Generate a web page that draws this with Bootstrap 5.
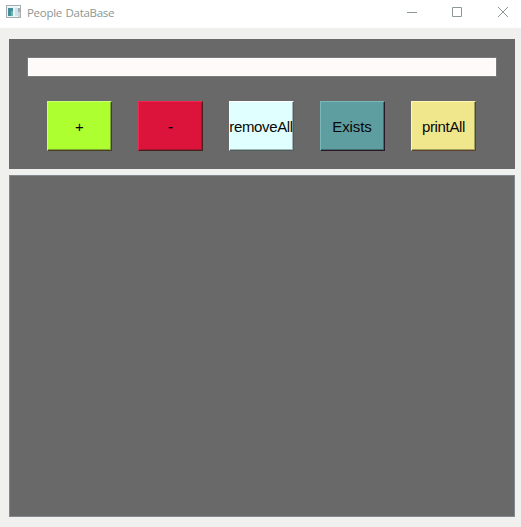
<!DOCTYPE html>
<html lang="en">
<head>
<meta charset="utf-8">
<title>People DataBase</title>
<link href="https://cdn.jsdelivr.net/npm/bootstrap@5.3.0/dist/css/bootstrap.min.css" rel="stylesheet">
<style>
body{background:#f0f0ee;font-family:"Liberation Sans",Arial,sans-serif}
.titlebar{height:28px;padding:5px 12px 0 6px}
.app-name{font:11.5px/16px "Open Sans","Noto Sans",sans-serif;color:#8b9793;margin-left:6px;letter-spacing:-.3px;word-spacing:1px}
.controls{gap:34px;padding-top:1px}
.client{padding:11px 6px 10px 9px;gap:6px}
.pane{background:#696969}
.tools{height:130px;padding:18px}
.entry{height:20px;border:1px solid #7a7a7a;background:#fffafa;box-shadow:inset 0 0 0 1px #fff;font-size:13px}
.keys{gap:26px;margin:24px 0 0 20px}
.key{width:65px;height:50px;border-radius:0;border:1px solid;padding:2px 0 0;font-size:15px;line-height:18px;white-space:nowrap;display:flex;justify-content:center;align-items:center}
.key span{flex:none}
.key,.key:hover{color:#080808}
.key-add,.key-add:hover{background:#adff2f;border-color:#c8ff75 #48401c #48401c #c8ff75;box-shadow:inset -1px -1px #7fa832}
.key-del,.key-del:hover{background:#dc143c;border-color:#f02850 #48201c #48201c #f02850;box-shadow:inset -1px -1px #a01832;color:#000}
.key-del span{-webkit-text-stroke:.2px #000}
.key-clear,.key-clear:hover{background:#e0ffff;border-color:#fff #4c6060 #4c6060 #fff;box-shadow:inset -1px -1px #a0b4b4}
.key-find,.key-find:hover{background:#5f9ea0;border-color:#78b8ba #281828 #281828 #78b8ba;box-shadow:inset -1px -1px #406c70}
.key-print,.key-print:hover{background:#f0e68c;border-color:#fff8b4 #604028 #604028 #fff8b4;box-shadow:inset -1px -1px #a0a060}
.key-clear,.key-print{letter-spacing:-.36px}
.key-clear{padding-right:1px}
.key-find{letter-spacing:-.1px;padding-right:1px}
.output{border:1px solid #828790}
</style>
<script src="https://cdn.jsdelivr.net/npm/bootstrap@5.3.0/dist/js/bootstrap.bundle.min.js"></script>
</head>
<body class="vh-100 d-flex flex-column overflow-hidden">
<header class="titlebar bg-white d-flex align-items-start">
  <svg width="15" height="13" shape-rendering="crispEdges"><path fill="#a7adae" d="M0 0h15v13H0z"/><path fill="#e9f4fa" d="M1 1h11v11H1z"/><path fill="#d2d6d9" d="M12 7h2v5h-2z"/><path fill="#fff" d="M12 1h2v2h-2z"/><path fill="#438e98" d="M2 3h5v8H2z"/><path fill="#6fb4a6" d="M5 6h2v5H5z"/><path fill="#c9e3f2" d="M9 3h3v8H9z"/></svg>
  <span class="app-name">People DataBase</span>
  <div class="controls d-flex ms-auto">
    <svg width="12" height="12"><path d="M2 6.5h10" stroke="#8d9997"/></svg>
    <svg width="12" height="12"><path d="M1.5 1.5h9v9h-9z" fill="none" stroke="#8d9997"/></svg>
    <svg width="12" height="12"><path d="M1 1l10 10M11 1L1 11" stroke="#909695"/></svg>
  </div>
</header>
<main class="client d-flex flex-column flex-grow-1">
  <section class="pane tools">
    <input class="entry form-control rounded-0 p-0" type="text" aria-label="Name">
    <div class="keys d-flex">
      <button class="btn key key-add"><span>+</span></button>
      <button class="btn key key-del"><span>-</span></button>
      <button class="btn key key-clear"><span>removeAll</span></button>
      <button class="btn key key-find"><span>Exists</span></button>
      <button class="btn key key-print"><span>printAll</span></button>
    </div>
  </section>
  <section class="pane output flex-grow-1"></section>
</main>
</body>
</html>
